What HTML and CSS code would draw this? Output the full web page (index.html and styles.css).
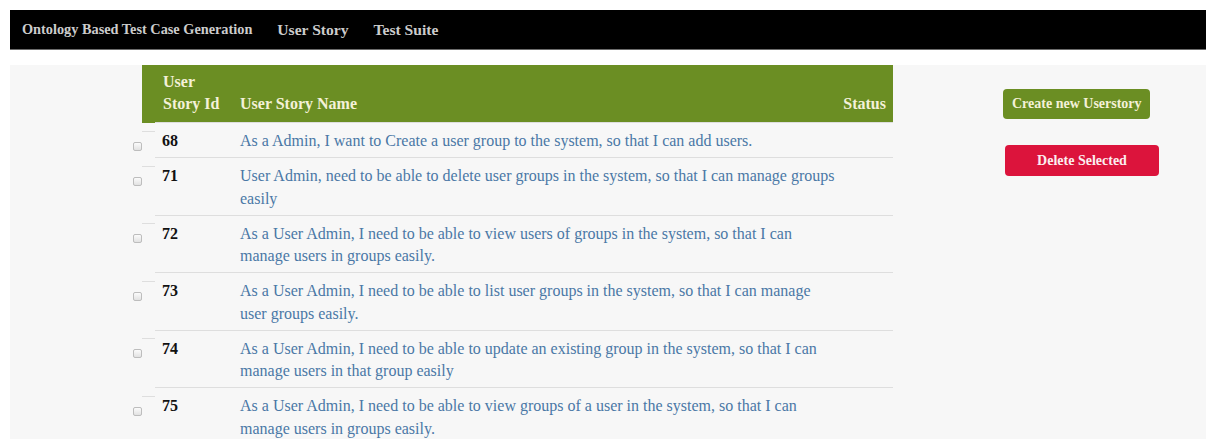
FILE: index.html
```html
<!DOCTYPE html>
<html lang="en">
<head>
<meta charset="utf-8">
<title>User Stories</title>
<link rel="stylesheet" href="styles.css">
</head>
<body>
<nav class="topbar">
  <a class="brand" href="#">Ontology Based Test Case Generation</a>
  <a class="nav-link" href="#">User Story</a>
  <a class="nav-link" href="#">Test Suite</a>
</nav>

<main class="workspace">
  <table class="stories">
    <colgroup>
      <col class="c-sel">
      <col class="c-id">
      <col class="c-name">
      <col class="c-status">
    </colgroup>
    <thead>
      <tr>
        <th class="sel"></th>
        <th class="id">User Story Id</th>
        <th class="name">User Story Name</th>
        <th class="status">Status</th>
      </tr>
    </thead>
    <tbody>
      <tr>
        <td class="sel"><div class="rule"></div><input class="pick" type="checkbox"></td>
        <td class="id">68</td>
        <td class="name">As a Admin, I want to Create a user group to the system, so that I can add users.</td>
        <td class="status"></td>
      </tr>
      <tr>
        <td class="sel"><div class="rule"></div><input class="pick" type="checkbox"></td>
        <td class="id">71</td>
        <td class="name">User Admin, need to be able to delete user groups in the system, so that I can manage groups easily</td>
        <td class="status"></td>
      </tr>
      <tr>
        <td class="sel"><div class="rule"></div><input class="pick" type="checkbox"></td>
        <td class="id">72</td>
        <td class="name">As a User Admin, I need to be able to view users of groups in the system, so that I can manage users in groups easily.</td>
        <td class="status"></td>
      </tr>
      <tr>
        <td class="sel"><div class="rule"></div><input class="pick" type="checkbox"></td>
        <td class="id">73</td>
        <td class="name">As a User Admin, I need to be able to list user groups in the system, so that I can manage user groups easily.</td>
        <td class="status"></td>
      </tr>
      <tr>
        <td class="sel"><div class="rule"></div><input class="pick" type="checkbox"></td>
        <td class="id">74</td>
        <td class="name">As a User Admin, I need to be able to update an existing group in the system, so that I can manage users in that group easily</td>
        <td class="status"></td>
      </tr>
      <tr>
        <td class="sel"><div class="rule"></div><input class="pick" type="checkbox"></td>
        <td class="id">75</td>
        <td class="name">As a User Admin, I need to be able to view groups of a user in the system, so that I can manage users in groups easily.</td>
        <td class="status"></td>
      </tr>
    </tbody>
  </table>

  <aside class="actions">
    <button class="btn btn-create" type="button">Create new Userstory</button>
    <button class="btn btn-delete" type="button">Delete Selected</button>
  </aside>
</main>
</body>
</html>
```

FILE: styles.css
```css
html {
  overflow: hidden;
}

body {
  margin: 10px 0 0 10px;
  background: #ffffff;
  font-family: "Liberation Serif", "Times New Roman", serif;
  color: #111;
}

/* top navigation bar */
.topbar {
  display: flex;
  align-items: center;
  gap: 25px;
  height: 39px;
  padding-left: 12px;
  background: #000;
  border-bottom: 1px solid #6b6b6b;
}

.topbar a {
  color: #cccccc;
  text-decoration: none;
  font-weight: bold;
}

.brand {
  font-size: 14.3px;
}

.nav-link {
  font-size: 15.6px;
}

/* main area: story table + action buttons */
.workspace {
  display: flex;
  align-items: flex-start;
  margin-top: 15px;
  padding-left: 132px;
  min-height: 400px;
  background: #f7f7f7;
}

.stories {
  width: 751px;
  table-layout: fixed;
  border-collapse: collapse;
  font-size: 16px;
  line-height: 22.25px;
}

.c-sel { width: 13px; }
.c-id { width: 77px; }
.c-name { width: 611px; }
.c-status { width: 50px; }

.stories thead th {
  background: #6b8e23;
  color: #f4f1d8;
  font-size: 16px;
  font-weight: bold;
  line-height: 22px;
  text-align: left;
  vertical-align: bottom;
  padding: 6px 8px 7px;
}

.stories thead th.sel {
  padding: 0;
}

.stories thead th.status {
  text-align: right;
  padding: 6px 7px 7px 0;
}

.stories tbody td {
  vertical-align: top;
  padding: 7px 8px 5px;
  border-top: 1px solid #dedede;
}

.stories tbody td.sel {
  padding: 7px 0 0;
  border-top: none;
}

.rule {
  margin-top: 1px;
  border-top: 1px solid #dedede;
}

.pick {
  appearance: none;
  -webkit-appearance: none;
  display: block;
  width: 9px;
  height: 9px;
  margin: 10px 0 0 -9px;
  border: 1px solid #bdbdbd;
  border-radius: 2px;
  background: linear-gradient(#fbfbfb, #e2e2e2);
  box-sizing: border-box;
}

.stories td.id {
  padding-left: 7px;
  font-weight: bold;
  color: #111;
}

.stories td.name {
  color: #4a78a6;
}

/* action buttons */
.actions {
  display: flex;
  flex-direction: column;
  align-items: flex-start;
  gap: 26px;
  margin-left: 110px;
  padding-top: 24px;
}

.btn {
  border: none;
  border-radius: 4px;
  font-family: "Liberation Serif", "Times New Roman", serif;
  font-size: 14px;
  font-weight: bold;
  cursor: pointer;
}

.btn-create {
  height: 30px;
  padding: 0 8px 0 9px;
  background: #6b8e23;
  color: #f4f1d8;
}

.btn-delete {
  width: 154px;
  height: 31px;
  margin-left: 2px;
  background: #dc143c;
  color: #fbeef0;
}
```
